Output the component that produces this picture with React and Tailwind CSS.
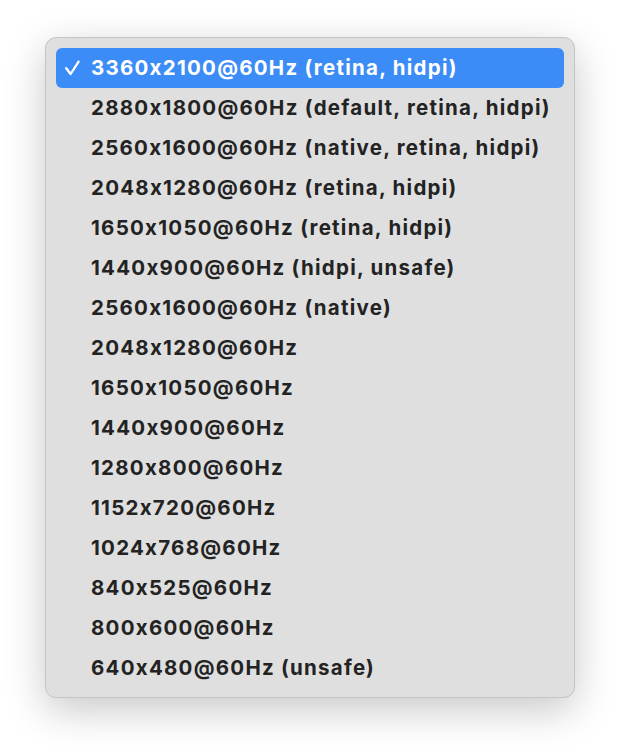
import React from "react";

const modes = [
  "3360x2100@60Hz (retina, hidpi)",
  "2880x1800@60Hz (default, retina, hidpi)",
  "2560x1600@60Hz (native, retina, hidpi)",
  "2048x1280@60Hz (retina, hidpi)",
  "1650x1050@60Hz (retina, hidpi)",
  "1440x900@60Hz (hidpi, unsafe)",
  "2560x1600@60Hz (native)",
  "2048x1280@60Hz",
  "1650x1050@60Hz",
  "1440x900@60Hz",
  "1280x800@60Hz",
  "1152x720@60Hz",
  "1024x768@60Hz",
  "840x525@60Hz",
  "800x600@60Hz",
  "640x480@60Hz (unsafe)",
];

export default function App() {
  const selected = 0;

  return (
    <div className="w-[620px] h-[752px] bg-white pt-[37px] pl-[45px] font-['Inter',sans-serif]">
      {/* menu panel */}
      <div className="w-[530px] rounded-[11px] bg-[#dfdfdf] border border-[#c4c4c4] shadow-[0_12px_40px_rgba(0,0,0,0.22)] pt-[10px] pb-[9px] px-[10px]">
        {modes.map((m, i) => (
          <div
            key={m}
            className={
              i === selected
                ? "h-[40px] flex items-center rounded-[6px] bg-[#3b8cf6] text-white"
                : "h-[40px] flex items-center text-[#232323]"
            }
          >
            <span className="w-[35px] pl-[9px] flex items-center">
              {i === selected && (
                <svg width="15" height="16" viewBox="0 0 15 16" fill="none">
                  <path d="M1.2 8.2 L5.6 14 L13.6 1.6" stroke="white" strokeWidth="2.3" strokeLinecap="round" strokeLinejoin="round" />
                </svg>
              )}
            </span>
            <span className="text-[20.5px] font-bold tracking-[1.25px] leading-none">{m}</span>
          </div>
        ))}
      </div>
    </div>
  );
}
